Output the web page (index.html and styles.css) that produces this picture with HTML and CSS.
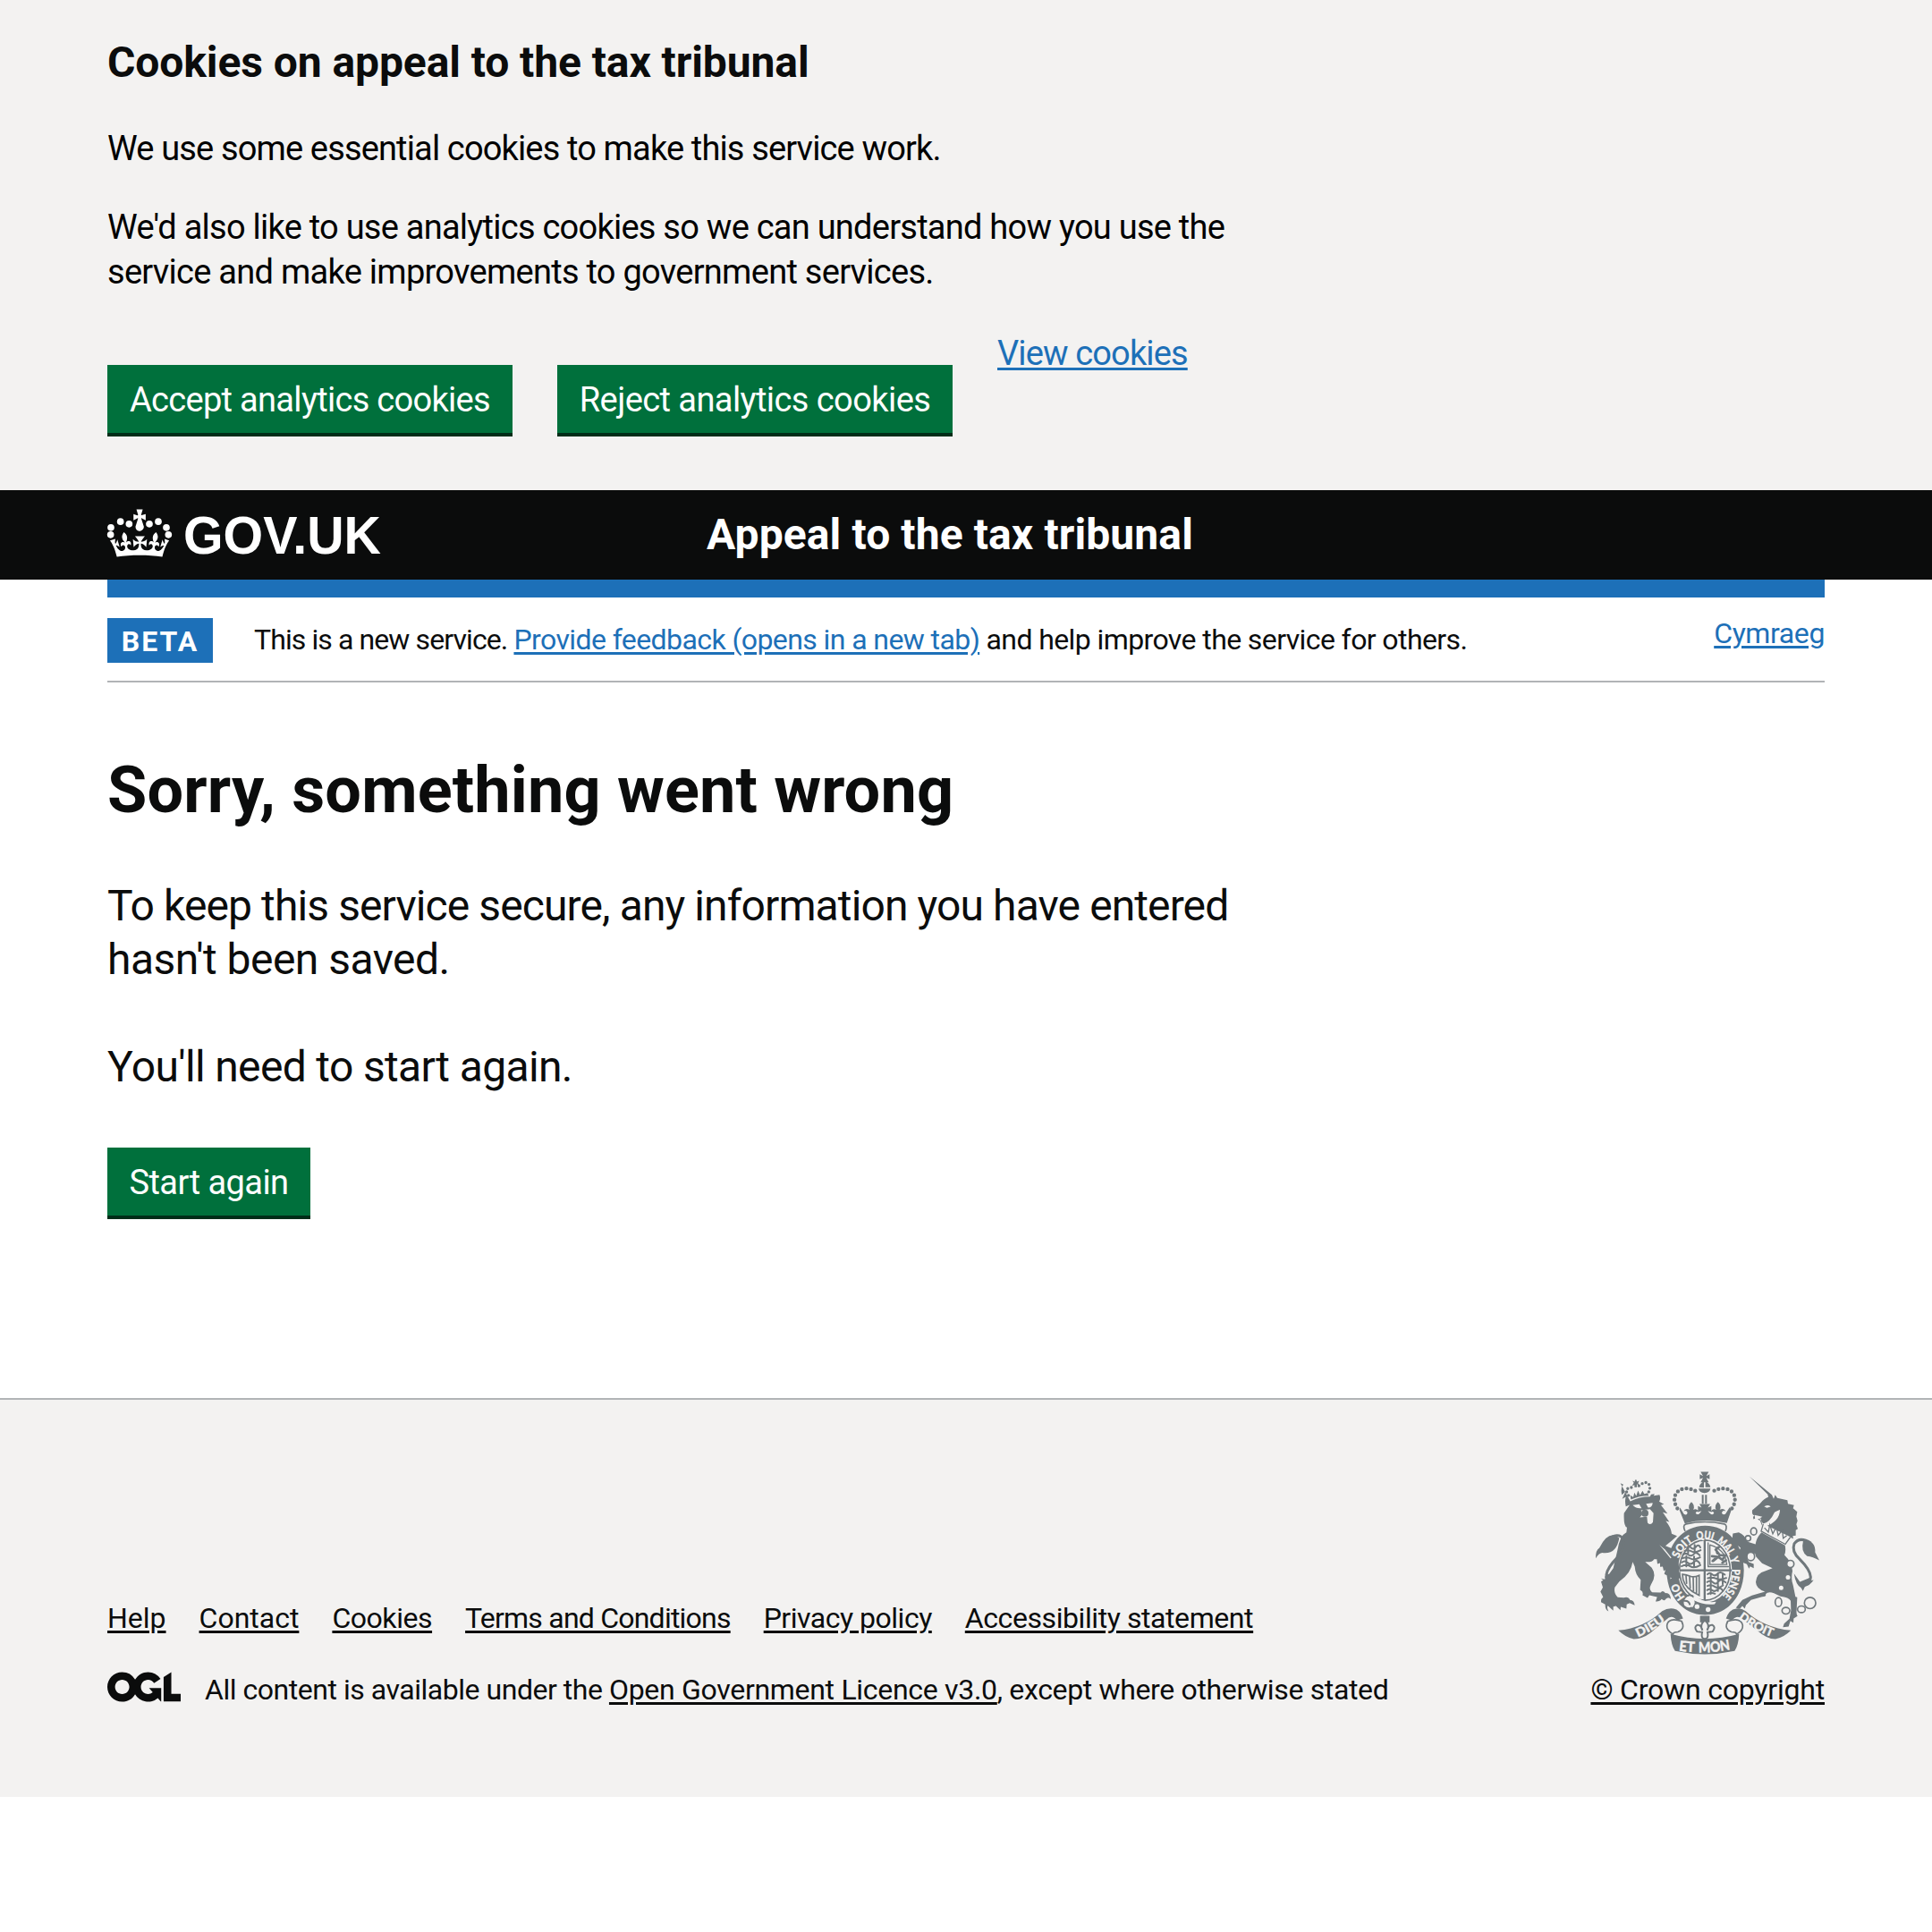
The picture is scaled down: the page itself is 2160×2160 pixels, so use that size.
FILE: index.html
```html
<!DOCTYPE html>
<html lang="en">
<head>
<meta charset="utf-8">
<title>Sorry, something went wrong</title>
<link rel="stylesheet" href="styles.css">
</head>
<body>
<div class="cookie-banner">
  <div class="container">
    <h2 class="cookie-title"><span class="t-cookie">Cookies on appeal to the tax tribunal</span></h2>
    <p class="cookie-text"><span class="t-c1">We use some essential cookies to make this service work.</span></p>
    <p class="cookie-text"><span class="t-c2">We'd also like to use analytics cookies so we can understand how you use the</span><br><span class="t-c3">service and make improvements to government services.</span></p>
    <div class="button-group">
      <button class="button button-accept"><span class="t-accept">Accept analytics cookies</span></button>
      <button class="button button-reject"><span class="t-reject">Reject analytics cookies</span></button>
      <a class="link view-cookies" href="#">View cookies</a>
    </div>
  </div>
</div>

<header class="header">
  <div class="container header-row">
    <a class="logo" href="#">
      <svg class="logo-svg" viewBox="0 0 310 60" role="img" aria-label="GOV.UK">
        <g transform="translate(-10 -6.5) scale(.3333)" fill="#fff">
          <circle cx="42" cy="88" r="11.5"/><circle cx="74" cy="68" r="11.5"/><circle cx="103" cy="76" r="11.5"/>
          <circle cx="171" cy="76" r="11.5"/><circle cx="201" cy="68" r="11.5"/><circle cx="228" cy="88" r="11.5"/>
          <circle cx="41" cy="112" r="11.5"/><circle cx="235" cy="112" r="11.5"/>
          <path transform="translate(39 27) scale(6.2)" d="M17 4.700l2.300 1.200V2.500l-2.300.7-.2-.2.9-3h-3.400l.9 3-.2.200c-.1.100-2.300-.7-2.300-.7v3.400L15 4.700c.1.100.1.200.2.200l-1.300 4c-.1.200-.1.400-.1.600 0 1.100.8 2 1.900 2.200h.7c1-.2 1.900-1.100 1.900-2.100 0-.2 0-.4-.1-.6l-1.300-4c-.1-.2 0-.2.100-.3"/>
          <path transform="translate(39 0) scale(6.2)" d="M16 29.200c4.400 0 8.600.3 12.300.8 1.100-4.500 2.400-7 3.700-8.800l-2.500-.9c.2 1.300.3 1.900 0 2.700-.4-.4-.8-1.100-1.100-2.300l-1.200 4c.7-.5 1.300-.8 2-.9-1.100 2.500-2.600 3.100-3.500 3-1.100-.2-1.700-1.200-1.500-2.100.3-1.200 1.500-1.500 2.100-.1 1.100-2.300-.8-3-2-2.300 1.900-1.900 2.100-3.500.6-5.600-2.100 1.600-2.100 3.200-1.200 5.500-1.200-1.400-3.200-.6-2.500 1.600.9-1.400 2.100-.5 1.900.8-.2 1.100-1.700 2.100-3.500 1.900-2.700-.2-2.900-2.100-2.900-3.600.7-.1 1.900.5 2.900 1.900l.4-4.300c-1.100 1.100-2.100 1.400-3.200 1.400.4-1.200 2.100-3 2.100-3h-5.400s1.700 1.900 2.100 3c-1.100 0-2.100-.2-3.200-1.400l.4 4.300c1-1.400 2.200-2 2.900-1.900-.1 1.500-.2 3.400-2.900 3.600-1.900.2-3.400-.8-3.500-1.900-.2-1.300 1-2.200 1.900-.8.700-2.300-1.200-3-2.500-1.600.9-2.200.9-3.900-1.200-5.500-1.500 2-1.300 3.700.6 5.600-1.200-.7-3.100 0-2 2.300.6-1.400 1.800-1.100 2.100.1.200.9-.3 1.900-1.500 2.100-.9.200-2.400-.5-3.500-3 .6 0 1.200.3 2 .9l-1.200-4c-.3 1.100-.7 1.900-1.100 2.300-.3-.8-.2-1.400 0-2.700l-2.900.9C1.300 23 2.600 25.500 3.700 30c3.700-.5 7.900-.8 12.300-.8"/>
        </g>
        <text class="logo-text" x="85" y="52" textLength="221" lengthAdjust="spacingAndGlyphs">GOV.UK</text>
      </svg>
    </a>
    <a class="service-name" href="#"><span class="t-service">Appeal to the tax tribunal</span></a>
  </div>
</header>

<div class="container">
  <div class="blue-bar"></div>
  <div class="phase-banner">
    <strong class="tag">BETA</strong>
    <p class="phase-text"><span class="t-p1">This is a new service. </span><a class="link t-p2" href="#">Provide feedback (opens in a new tab)</a><span class="t-p3"> and help improve the service for others.</span></p>
    <a class="link language" href="#">Cymraeg</a>
  </div>
  <main class="main">
    <h1 class="title"><span class="t-h1">Sorry, something went wrong</span></h1>
    <p class="lead"><span class="t-l1">To keep this service secure, any information you have entered</span><br><span class="t-l2">hasn't been saved.</span></p>
    <p class="lead"><span class="t-l3">You'll need to start again.</span></p>
    <button class="button button-start"><span class="t-start">Start again</span></button>
  </main>
</div>

<footer class="footer">
  <div class="container footer-row">
    <div class="footer-meta">
      <ul class="footer-links">
        <li><a class="f1" href="#">Help</a></li>
        <li><a class="f2" href="#">Contact</a></li>
        <li><a class="f3" href="#">Cookies</a></li>
        <li><a class="f4" href="#">Terms and Conditions</a></li>
        <li><a class="f5" href="#">Privacy policy</a></li>
        <li><a class="f6" href="#">Accessibility statement</a></li>
      </ul>
      <div class="licence">
        <svg class="ogl" viewBox="0 0 483.2 195.7" aria-hidden="true"><path fill="#0b0c0c" d="M421.5 142.8V.1l-50.7 32.3v161.1h112.4v-50.7zm-122.3-9.6A47.12 47.12 0 0 1 221 97.800c0-26 21.100-47.100 47.100-47.100 16.700 0 31.400 8.700 39.700 21.800l42.700-27.200A97.630 97.630 0 0 0 268.100 0c-36.500 0-68.300 20.100-85.100 49.700A98 98 0 0 0 97.800 0C43.900 0 0 43.900 0 97.800s43.900 97.800 97.800 97.800c36.500 0 68.300-20.100 85.100-49.700a97.760 97.760 0 0 0 149.600 25.400l19.400 22.200h3v-87.800h-80l24.300 27.500zM97.800 145c-26 0-47.100-21.100-47.100-47.100s21.100-47.100 47.100-47.100 47.100 21.100 47.100 47.100S123.800 145 97.800 145"/></svg>
        <p class="licence-text"><span class="g1">All content is available under the </span><a class="g2" href="#">Open Government Licence v3.0</a><span class="g3">, except where otherwise stated</span></p>
      </div>
    </div>
    <div class="footer-crest">
      <svg class="crest" viewBox="42 44 750 614" aria-hidden="true">
        <defs>
          <path id="motto-left" d="M342 466Q322 442 316 406"/>
          <path id="motto-ring" d="M320 338A93 108 0 1 1 466 461"/>
          <path id="scroll-left" d="M184 600Q240 576 290 534"/>
          <path id="scroll-right" d="M520 537Q580 582 642 602"/>
          <path id="scroll-mid" d="M320 645Q408 658 496 641"/>
        </defs>
        <g fill="#6f777b">
          <!-- crown -->
          <path d="M394 45h27l-8 14 11-6v17l-11-5 8 15h-27l8-15-11 5V53l11 6zM389 97q3-15 16-18v19zM410 79q14 3 17 18h-17zM387 101h40q-2 13-20 15-18-2-20-15zM398 122h6v30h-6zm11 0h6v30h-6z"/>
          <g fill="none" stroke="#6f777b" stroke-width="13" stroke-linecap="round">
            <path stroke-dasharray="0 15.500" d="M316 168C286 120 330 80 384 113"/>
            <path stroke-dasharray="0 15.500" d="M499 168C530 120 485 80 431 113"/>
          </g>
          <path d="M325 165l13 22q10 5 12-5-3-9-13-5 5-12 20-5-8-14 6-26 14 12 6 26 14-5 18 8-6-4-10 3 5 8 13 2l7-9-12 4v-20l12 5-7-12h36l-8 12 12-5v20l-12-4 9 10q8 5 12-3-4-7-10-3 4-13 17-8-8-14 6-26 14 12 6 26 15-7 20 5-10-4-13 5 2 9 12 5l14-23 6 9-15 44Q408 200 341 218l-18-45z"/>
          <path fill="none" stroke="#6f777b" stroke-width="5" d="M342 244q-10-20 3-24 63-14 128 0 12 4 4 24"/>
          <!-- garter and shield -->
          <path fill-rule="evenodd" d="M409 226c75 0 130 62 130 149s-55 150-130 150-129-64-129-150 54-149 129-149zm0 42c-52 0-91 46-91 107s39 108 91 108 90-47 90-108-38-107-90-107z"/>
          <ellipse cx="408" cy="375" rx="85" ry="101" fill="none" stroke="#6f777b" stroke-width="5"/>
          <path d="M404 270h7v212h-7zM319 372h179v7H319z"/>
          <g fill="none" stroke="#6f777b" stroke-width="6" stroke-linecap="round">
            <path d="M345 298q8-8 16 1t17-2 15 2M340 310q14-5 24 2t30-4M335 323q8-8 18 0t18-2 20 4M333 335q15-6 27 1t32-4M331 349q10-8 20 1t20-2 20 4M330 362q16-8 29 0t34-4M352 290v28m22-28v26m-28 12v34m26-33v32"/>
            <path d="M417 389q7-8 16 0t18-2 24 3M418 402q14-5 28 1t34-2M416 415q10-8 20 1t18-3 24 3M417 428q12-6 24 2t28-4M416 442q8-7 16 0t18-2 17 2M418 455q12-6 24-1M428 387v68m24-70v60m16-58v35"/>
            <path stroke-width="4" d="M419 283v80h68M425 290q30 8 50 35l7 31M425 290v66h57"/>
            <path stroke-width="8" d="M434 344l16-14-18-2m12-22 14 18 18 2-9 14-12-8m-5-14q-8-18 5-20m12 52 12-8m-21-16-22 18"/>
            <path stroke-width="5" d="M333 389q0 35 34 58l22 12V392q-18 8-30 3t-26-6zM345 394l2 25m10-22 2 38m10-38 1 47m10-47v52"/>
          </g>
          <circle cx="354" cy="483" r="20" fill="#f3f2f1"/>
          <path fill="none" stroke="#6f777b" stroke-width="6" d="M376 468q-20-18-34-2-12 14-5 29 16 14 28 5m-27-22q18-2 20 14"/>
          <g fill="#f3f2f1"><circle cx="382" cy="497" r="8"/><circle cx="419" cy="507" r="8"/><path d="M371 460q40 28 75 21l-5 8q-36 5-72-14z"/></g>
          <!-- lion -->
          <path fill="none" stroke="#6f777b" stroke-width="10" stroke-dasharray="0 13" stroke-linecap="round" d="M152 124Q133 98 168 97M187 92Q215 70 223 92 226 102 218 116"/>
          <path d="M170 82l-5-7 8 3 1-6h5l1 6 8-3-4 8 5 7-9-3v10h-8V89l-8 3zM158 124l10 6 4-15 6 11 6-18 7 15 8-14 6 10 11-3 4 9q-33 0-60 13z"/>
          <path fill="#f3f2f1" stroke="#f3f2f1" stroke-width="12" d="M272 300l28 32 18 47-22 16z"/>
          <path d="M158 144q30-16 66-16l4-7 12-2-4 6 20-3q5 12-1 23l16 9-10 3 22 28-16-4 22 32-12-3q18 22 20 43l18 7-17 15-22 18 22 9q20 16 23 60l4 40-10 2-6-8-4 11-12-8-2 8-9-14-10-5 4-14-6 3-3-14-9 1v-13l-9 3-2-16h-9q-8 12-30 9l22 20q18 26-2 55-10 18 4 27l28 1q6-10 16 2 16-2 18 20-9-9-17 0-4 8-14 0-6 9-20 8l5-15-26-6-6 9-17-9q4-12-8-18l2-34q-18-16-20-44l-7-16q-5 38-45 66l-15 20q-4 20 10 33l20 1q16-5 21 8 14 0 16 18l-17-8-10 5-1 14-19-6-1 11-15-14-9 2 0 14-18-17q-5 5 2 19-12-6-11-23l-14-8q-1-11 7-17l-9-18 8-14-6-20 14-9q-6-14 13-16l14-20 14-60q8-50 30-60l2-16q-12-4-10-48l19-28-13 5q-4-18 0-32l-12 7 11-25-12 11q-6-22 5-34l-10-5z"/>
          <g fill="#f3f2f1"><path d="M166 157l22-3 8 13q-17 3-30-10zM211 152l22-3q0 15-15 16zM194 174l30-4 12 14-2 30q-8 12-18 2l-2-20-24 2 8-10zM256 290l18 15 22 28-3 2-22-27z"/></g>
          <circle cx="207" cy="184" r="12"/>
          <path fill="none" stroke="#6f777b" stroke-width="9" d="M78 276q40-32 57-5 8 24-19 60-35 35-38 59 1 18 19 20"/>
          <path d="M42 335q14-22 26-18 44 4 53-50-35-30-67 34-12 6-12 34zM60 403l22 5 25-12-2 11 16-2q-18 20-31 16l-18 5 5-9z"/>
          <!-- unicorn -->
          <path d="M557 60l76 62 6 14 5-14 7 11 34 7 2 12 20 5-3 10 14 12-3 16 4 14-4 12 5 15-7 5v18l-10 1 2 9-104-41-8-20q-7 1-9-9l-13 5-1-8 5-4q-10-2-8-18l27-23q13-17 27-21l-2-9z"/>
          <path fill="#f3f2f1" d="M607 161q16-8 22 1l-13 4zM575 190l26 6-10 6 13 17q22-4 38-38 18-10 18-8-1 38-50 56l-9-7-6-21-18 5z"/>
          <path fill="#f3f2f1" d="M602 218l-8 28 84 46 18-28z"/>
          <path fill="none" stroke="#6f777b" stroke-width="4" d="M604 220l-7 24 81 44 17-24M608 233l13 14 5-24 10 30 12-23 6 28 14-17 3 27 12-9"/>
          <path d="M598 248L677 292Q681 310 675 324 700 348 702 378 696 405 704 425L712 464 718 466 716 508Q714 522 719 529L706 537 705 551 695 545 689 564 670 566 674 554 692 538 697 510 696 478Q690 466 662 463L640 452Q620 446 612 455 616 463 600 464L563 475 546 492 542 504 534 495 525 505 512 501 534 475 566 460 610 447Q580 438 579 415 580 385 612 377L635 368 600 352 580 330 576 318 563 332 548 334 556 348 572 354 572 368 560 362 556 370 549 355 532 348 520 318 528 300Q516 286 510 297L498 292 502 252 522 248Q542 256 552 280L578 288Q580 268 598 248z"/>
          <path fill="none" stroke="#6f777b" stroke-width="9" d="M764 284q-38-24-56 2-10 27 18 52 36 36 37 60 0 20-27 30"/>
          <path d="M738 277q42-5 40 38l14 27q-22-12-41-14-22-16-13-51zM707 386l20 28 38-16-2 12 10-2q-14 20-29 22l-7 15-6-11q-18-10-24-48z"/>
          <g fill="#f3f2f1" stroke="#6f777b" stroke-width="5"><ellipse cx="572" cy="245" rx="10" ry="12"/><circle cx="553" cy="268" r="9"/><ellipse cx="562" cy="329" rx="13" ry="14"/><circle cx="695" cy="354" r="12"/><circle cx="687" cy="399" r="10"/><circle cx="664" cy="434" r="10"/><ellipse cx="655" cy="482" rx="11" ry="15"/><ellipse cx="680" cy="511" rx="13" ry="11"/><ellipse cx="732" cy="506" rx="13" ry="11"/><circle cx="761" cy="485" r="19"/></g>
          <!-- scroll -->
          <path d="M118 577q24 24 52 29 30-1 55-20l54-45q18-20 36 3l20-7q-10-30-32-33-20-3-38 8-60 56-147 65z"/>
          <path d="M697 577q-24 24-52 29-30-1-60-28l-48-37q-20-20-38 3l-20-7q10-30 34-33 16-3 32 8 62 56 152 65z"/>
          <path d="M293 589q115 32 230 0-2 38-15 57-100 22-200 0-13-19-15-57z"/>
          <path fill="#f3f2f1" stroke="#6f777b" stroke-width="5" d="M330 546q-45-14-49 14-2 16 20 30 2-8 17-8 26-10 12-36zM485 546q45-14 50 14 2 16-20 30-2-8-18-8-26-10-12-36z"/>
          <path d="M392 528h32v22h-32z"/>
          <path fill="#f3f2f1" stroke="#6f777b" stroke-width="6" d="M408 543q-19 16-8 34-5-21-18-18-12 7 0 22l17 2q-5 22 9 22t9-22l17-2q12-15 0-22-13-3-18 18 11-18-8-34z"/>
        </g>
        <g class="motto">
          <text font-size="36"><textPath href="#motto-left" textLength="54" lengthAdjust="spacingAndGlyphs">HO</textPath></text>
          <text font-size="37"><textPath href="#motto-ring" startOffset="2" textLength="76" lengthAdjust="spacingAndGlyphs">SOIT</textPath></text>
          <text font-size="37"><textPath href="#motto-ring" startOffset="92" textLength="54" lengthAdjust="spacingAndGlyphs">QUI</textPath></text>
          <text font-size="37"><textPath href="#motto-ring" startOffset="160" textLength="62" lengthAdjust="spacingAndGlyphs">MAL</textPath></text>
          <text font-size="37"><textPath href="#motto-ring" startOffset="230" textLength="21" lengthAdjust="spacingAndGlyphs">Y</textPath></text>
          <text font-size="37"><textPath href="#motto-ring" startOffset="268" textLength="98" lengthAdjust="spacingAndGlyphs">PENSE</textPath></text>
          <text font-size="40"><textPath href="#scroll-left" textLength="108" lengthAdjust="spacingAndGlyphs">DIEU</textPath></text>
          <text font-size="40"><textPath href="#scroll-right" textLength="128" lengthAdjust="spacingAndGlyphs">DROIT</textPath></text>
          <text font-size="48"><textPath href="#scroll-mid" textLength="54" lengthAdjust="spacingAndGlyphs">ET</textPath></text>
          <text font-size="48"><textPath href="#scroll-mid" startOffset="67" textLength="108" lengthAdjust="spacingAndGlyphs">MON</textPath></text>
        </g>
      </svg>
      <a class="copyright" href="#">© Crown copyright</a>
    </div>
  </div>
</footer>
</body>
</html>
```
FILE: styles.css
```css
* { box-sizing: border-box; }
body {
  margin: 0;
  background: #fff;
  color: #0b0c0c;
  font-family: Roboto, sans-serif;
  white-space: nowrap;
}
h1, h2, p, ul { margin: 0; padding: 0; }
.container { width: 1920px; margin: 0 auto; }

.cookie-banner { height: 548px; padding-top: 40px; background: #f3f2f1; color: #000; }
.cookie-title { margin-bottom: 41px; color: #0b0c0c; font-size: 48px; font-weight: 700; line-height: 60px; }
.cookie-text { margin-bottom: 38px; font-size: 38px; line-height: 50px; }
.button-group { display: flex; align-items: flex-start; margin-top: 79px; }
.view-cookies { margin: -38px 0 0 50px; font-size: 38px; line-height: 50px; letter-spacing: -0.86px; }

.button {
  display: block;
  height: 76px;
  padding: 2px 0 0;
  border: 0;
  background: #00703c;
  box-shadow: 0 4px 0 #002d18;
  color: #fff;
  font: inherit;
  font-size: 38px;
  line-height: 38px;
  text-align: center;
}
.button-accept { width: 453px; }
.button-reject { width: 442px; margin-left: 50px; }
.button-start { width: 227px; }

.link { color: #1d70b8; text-decoration: underline; text-decoration-thickness: 3px; text-underline-offset: 3px; }

.header { height: 100px; background: #0b0c0c; }
.header-row { display: flex; }
.logo { width: 670px; padding-top: 19px; }
.logo-svg { display: block; width: 310px; height: 60px; overflow: visible; }
.logo-text { fill: #fff; font-family: "Liberation Sans", Arial, sans-serif; font-size: 59px; font-weight: 700; }
.service-name { padding-top: 20px; color: #fff; font-size: 48px; font-weight: 700; line-height: 60px; text-decoration: none; }

.blue-bar { height: 20px; background: #1d70b8; }
.phase-banner { display: flex; align-items: flex-start; height: 95px; padding-top: 23px; border-bottom: 2px solid #b1b4b6; }
.tag { width: 118px; height: 50px; background: #1d70b8; color: #fff; font-size: 32px; line-height: 52px; letter-spacing: 2px; text-align: center; }
.phase-text { flex: 1; margin: 4px 0 0 46px; font-size: 32px; line-height: 40px; white-space: pre; }
.language { margin-top: -3px; font-size: 32px; line-height: 40px; letter-spacing: -0.4px; }

.main { padding-top: 83px; }
.title { margin-bottom: 62px; font-size: 72px; font-weight: 700; line-height: 75px; }
.lead { margin-bottom: 60px; font-size: 48px; line-height: 60px; }
.button-start { margin-top: 60px; }

.footer { height: 446px; margin-top: 204px; padding-top: 80px; border-top: 2px solid #b1b4b6; background: #f3f2f1; font-size: 32px; line-height: 40px; }
.footer-row { display: flex; justify-content: space-between; align-items: flex-end; }
.footer a { color: #0b0c0c; text-decoration: underline; text-decoration-thickness: 3px; text-underline-offset: 3px; }
.footer-links { display: flex; gap: 37px; margin-bottom: 40px; list-style: none; }
.licence { display: flex; align-items: flex-start; }
.ogl { width: 82px; height: 34px; margin-right: 27px; }
.licence-text { white-space: pre; }
.footer-crest { display: flex; flex-direction: column; align-items: flex-end; }
.crest { display: block; width: 250px; height: 205px; margin: 0 6px 19px 0; }
.motto { fill: #f3f2f1; stroke: #f3f2f1; stroke-width: 1; font-family: Lato, sans-serif; font-weight: 900; }

/* tracking */
.t-cookie { letter-spacing: -0.09px; }
.t-c1 { letter-spacing: -0.85px; }
.t-c2 { letter-spacing: -0.75px; }
.t-c3 { letter-spacing: -0.72px; }
.t-accept { letter-spacing: -0.69px; }
.t-reject { letter-spacing: -0.57px; }
.t-service { letter-spacing: 0.1px; }
.t-p1 { letter-spacing: -0.9px; }
.t-p2 { letter-spacing: -0.59px; }
.t-p3 { letter-spacing: -0.6px; }
.t-h1 { letter-spacing: 0.17px; }
.t-l1 { letter-spacing: -0.89px; }
.t-l2 { letter-spacing: -0.54px; }
.t-l3 { letter-spacing: -0.65px; }
.t-start { letter-spacing: -0.56px; }
.f3 { letter-spacing: -0.45px; }
.f4 { letter-spacing: -0.78px; }
.f5 { letter-spacing: -0.49px; }
.f6 { letter-spacing: -0.42px; }
.g1 { letter-spacing: -0.47px; }
.g2 { letter-spacing: -0.3px; }
.g3 { letter-spacing: -0.35px; }
.copyright { letter-spacing: -0.2px; }
```
